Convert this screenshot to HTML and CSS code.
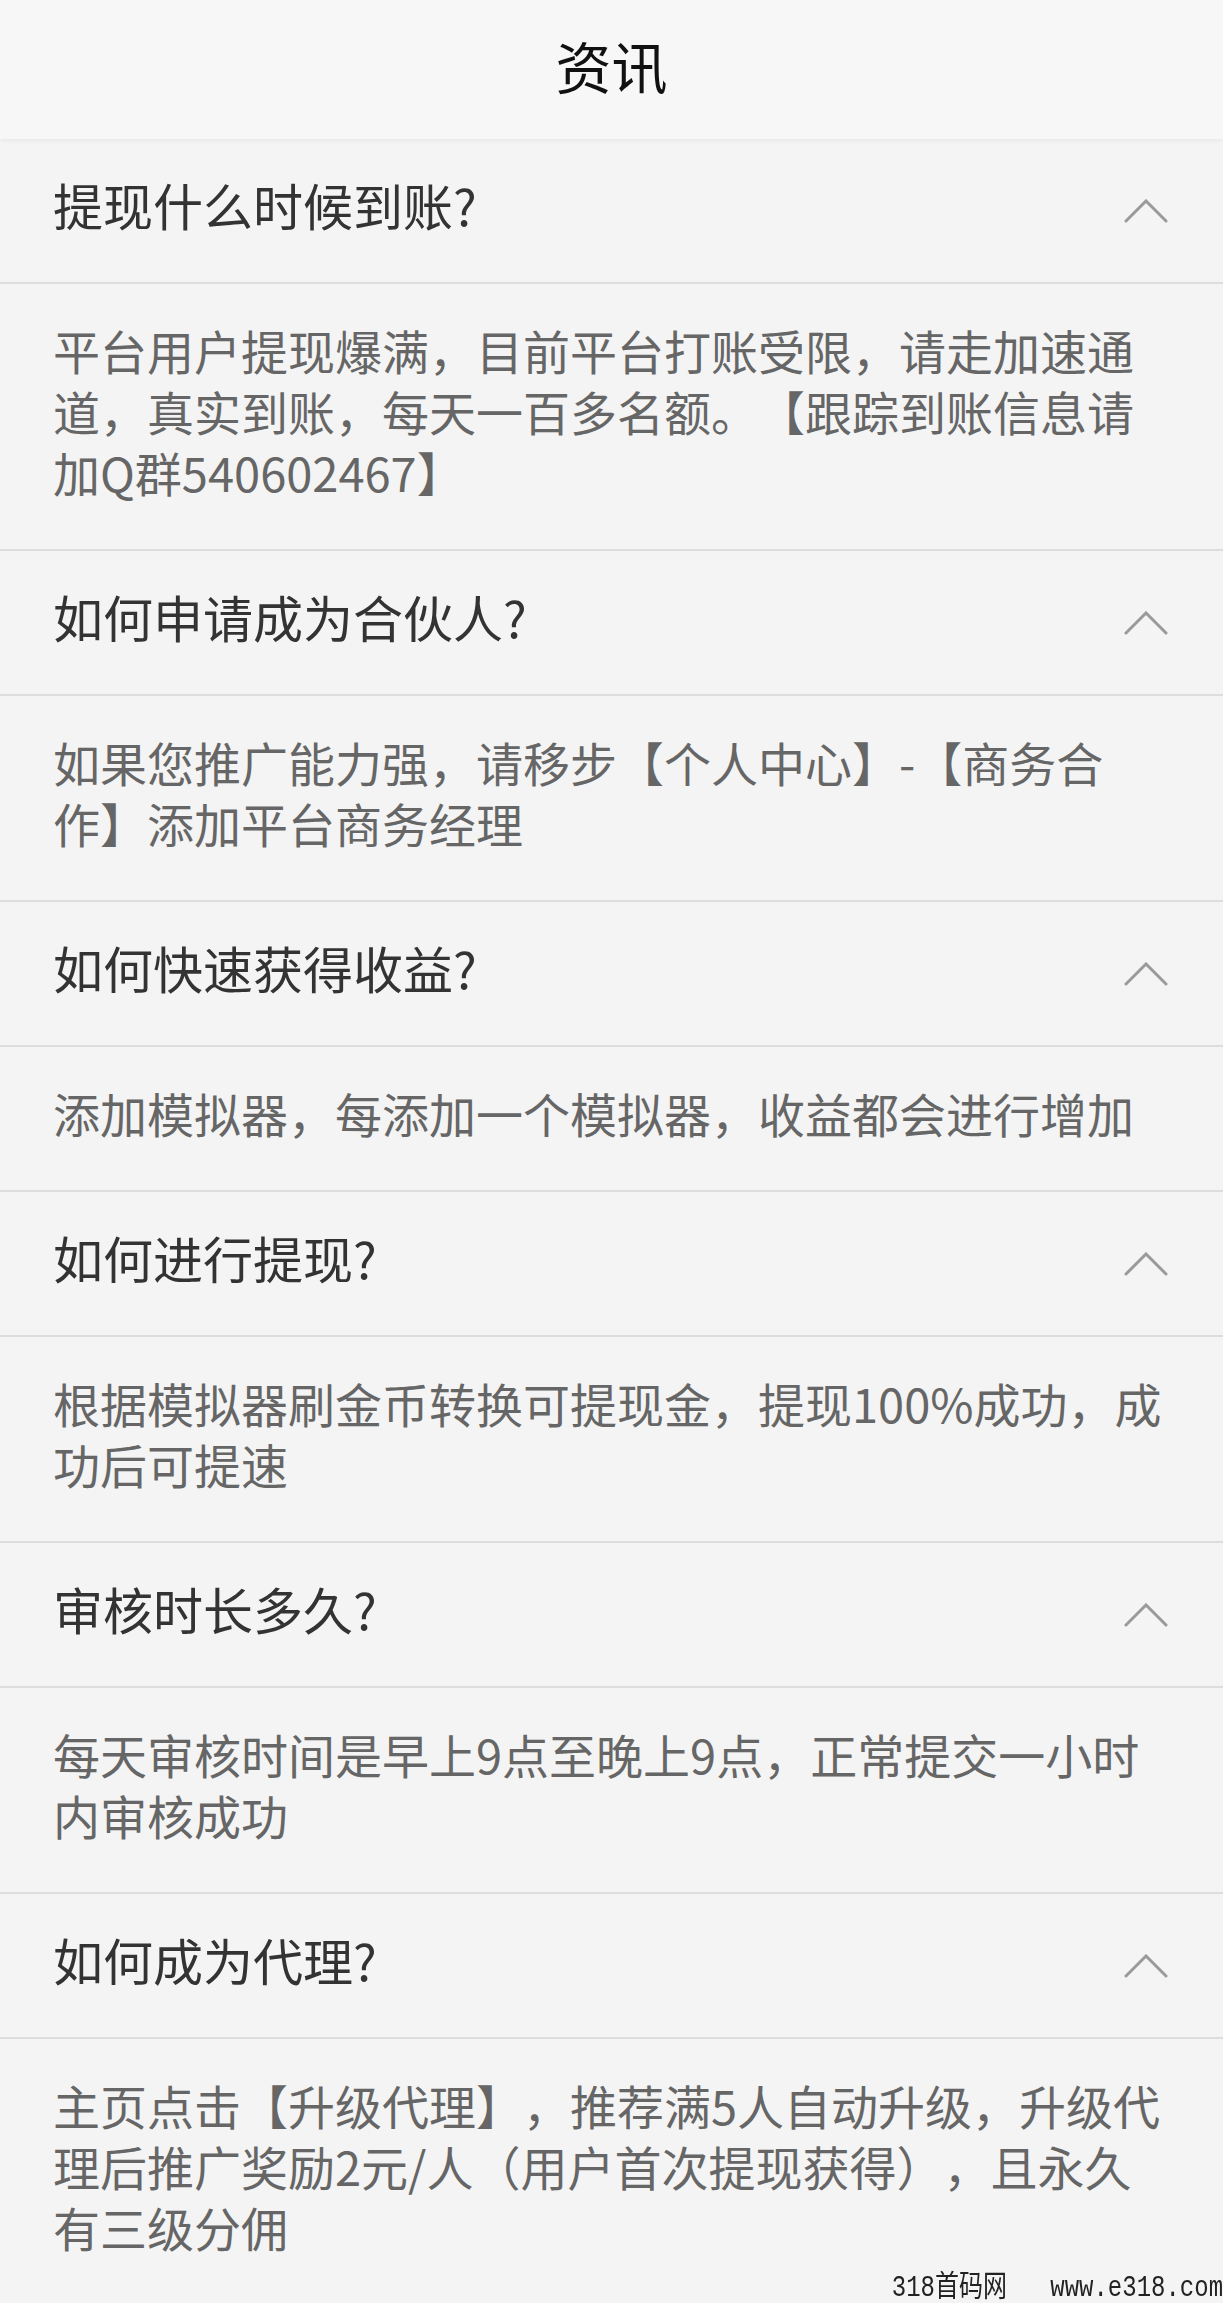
FILE: index.html
```html
<!DOCTYPE html>
<html lang="zh-CN">
<head>
    <meta charset="UTF-8">
    <meta name="viewport" content="width=device-width, initial-scale=1.0">
    <title>资讯</title>
    <link rel="stylesheet" href="styles.css">
</head>
<body>
    <header class="top-bar">
        <h1>资讯</h1>
    </header>

    <div class="faq-list">
        <div class="faq-item">
            <div class="faq-q">
                <span>提现什么时候到账?</span>
                <svg class="arrow" viewBox="0 0 44 24"><polyline points="2,22 22,2 42,22"/></svg>
            </div>
            <div class="faq-a">平台用户提现爆满，目前平台打账受限，请走加速通道，真实到账，每天一百多名额。【跟踪到账信息请加Q群540602467】</div>
        </div>

        <div class="faq-item">
            <div class="faq-q">
                <span>如何申请成为合伙人?</span>
                <svg class="arrow" viewBox="0 0 44 24"><polyline points="2,22 22,2 42,22"/></svg>
            </div>
            <div class="faq-a">如果您推广能力强，请移步【个人中心】-【商务合作】添加平台商务经理</div>
        </div>

        <div class="faq-item">
            <div class="faq-q">
                <span>如何快速获得收益?</span>
                <svg class="arrow" viewBox="0 0 44 24"><polyline points="2,22 22,2 42,22"/></svg>
            </div>
            <div class="faq-a">添加模拟器，每添加一个模拟器，收益都会进行增加</div>
        </div>

        <div class="faq-item">
            <div class="faq-q">
                <span>如何进行提现?</span>
                <svg class="arrow" viewBox="0 0 44 24"><polyline points="2,22 22,2 42,22"/></svg>
            </div>
            <div class="faq-a">根据模拟器刷金币转换可提现金，提现100%成功，成功后可提速</div>
        </div>

        <div class="faq-item">
            <div class="faq-q">
                <span>审核时长多久?</span>
                <svg class="arrow" viewBox="0 0 44 24"><polyline points="2,22 22,2 42,22"/></svg>
            </div>
            <div class="faq-a">每天审核时间是早上9点至晚上9点，正常提交一小时内审核成功</div>
        </div>

        <div class="faq-item">
            <div class="faq-q">
                <span>如何成为代理?</span>
                <svg class="arrow" viewBox="0 0 44 24"><polyline points="2,22 22,2 42,22"/></svg>
            </div>
            <div class="faq-a">主页点击【升级代理】，推荐满5人自动升级，升级代理后推广奖励2元/人（用户首次提现获得），且永久有三级分佣</div>
        </div>
    </div>

    <div class="watermark">318首码网   www.e318.com</div>
</body>
</html>
```

FILE: styles.css
```css
body {
    margin: 0;
    font-family: "Noto Sans CJK SC", "Noto Sans", sans-serif;
    background-color: #f4f4f4;
    color: #333333;
    text-spacing-trim: space-all;
}
.top-bar {
    height: 139px;
    display: flex;
    align-items: center;
    justify-content: center;
    background-color: #f7f7f7;
    box-shadow: 0 2px 4px rgba(0, 0, 0, 0.05);
    position: relative;
}
.top-bar h1 {
    margin: 0;
    font-size: 56px;
    font-weight: 400;
    color: #111111;
    line-height: 1;
    padding-bottom: 10px;
}
.faq-q {
    display: flex;
    align-items: center;
    justify-content: space-between;
    padding: 41px 55px 41px 53px;
    font-size: 50px;
    color: #333333;
    border-bottom: 2px solid #dddddd;
}
.faq-q span {
    display: block;
    line-height: 49px;
    padding-bottom: 12px;
}
.arrow {
    width: 44px;
    height: 24px;
    fill: none;
    stroke: #9a9a9a;
    stroke-width: 3;
    stroke-linecap: round;
}
.faq-a {
    padding: 35px 53px 47px;
    font-size: 47px;
    line-height: 61px;
    color: #666666;
    border-bottom: 2px solid #dddddd;
}
.watermark {
    position: fixed;
    right: 0;
    bottom: 0;
    font-family: "Liberation Mono", "Noto Sans CJK SC", monospace;
    font-size: 30px;
    line-height: 30px;
    color: #222222;
    white-space: pre;
    transform: scaleX(0.8);
    transform-origin: right bottom;
}
```
